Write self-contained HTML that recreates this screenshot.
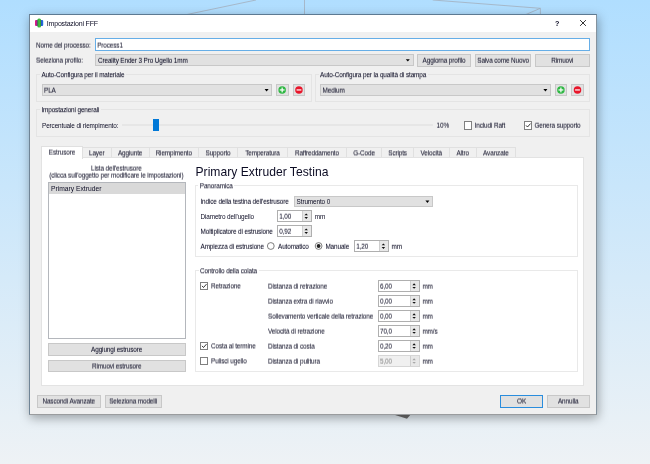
<!DOCTYPE html>
<html lang="it"><head><meta charset="utf-8"><title>Impostazioni FFF</title>
<style>
html,body{margin:0;padding:0}
body{width:650px;height:464px;overflow:hidden;position:relative;
background:linear-gradient(180deg,#b0deff,#eef2f5);
font-family:"Liberation Sans",sans-serif;}
div,span,svg{position:absolute;box-sizing:border-box}
#root{left:0;top:0;width:650px;height:464px;will-change:transform}
.a{overflow:visible}
#dlg{left:29px;top:14px;width:568px;height:401px;background:#f0f0f0;border:1px solid;border-color:#5d7a92 #84929d #9a9c9e #6f8496;
box-shadow:1px 3px 10px rgba(0,0,0,0.34);}
#tb{left:30px;top:15px;width:566px;height:16.7px;background:#fff}
.t{font-size:6.4px;letter-spacing:-0.12px;line-height:8px;height:8px;white-space:pre;color:#000}
.tt{font-size:7px;letter-spacing:-0.19px;line-height:8px;height:8px;white-space:pre;color:#000}
.li{font-size:6.72px;letter-spacing:0;line-height:8px;height:8px;white-space:pre;color:#000}
.h{font-size:12.1px;letter-spacing:0.03px;line-height:14px;height:14px;white-space:pre;color:#000}
.btn{background:#e1e1e1;border:1px solid #c8c8c8}
.btn.def{border:1px solid #2a8ddd}
.inp{background:#fff;border:1px solid #66aee7}
.grp{border:1px solid #e4e4e4}
.grp.w{border-color:#e9e9e9}
.trk{background:#d8d8d8;border:0.5px solid #e6e6e6}
.pane{background:#fff;border:1px solid #e3e3e3}
.tab{background:#f0f0f0;border:1px solid #e0e0e0;border-bottom:none}
.tab.sel{background:#fff;border:1px solid #e0e0e0;border-bottom:none}
.lst{background:#fff;border:1px solid #b4b7bc}
.spin{background:#fff;border:1px solid #afafaf}
.spin.dis{background:#f0f0f0;border-color:#d6d6d6}
.spb{background:#e8e8e8;border-left:1px solid #cfcfcf}
.cb{background:#fff;border:1px solid #808080}
</style></head>
<body>
<div id="root">
<svg class="a" style="left:0;top:0" width="650" height="464" viewBox="0 0 650 464"><g stroke="#a3afbc" stroke-width="0.8" fill="none"><path d="M187 14.5L256 0"/><path d="M304.5 0V14.5"/><path d="M432.7 0L540.35 8.3L525.9 14.5"/><path d="M540.35 8.3V14.5"/></g><path d="M385.5 412L412.9 412L407 418.8Z" fill="#6c6c6c"/></svg>
<div id="dlg"></div>
<div id="tb"></div>
<svg class="a" style="left:0;top:0" width="60" height="40" viewBox="0 0 60 40"><defs><linearGradient id="g1" x1="0" x2="1"><stop offset="0" stop-color="#f0157e"/><stop offset="1" stop-color="#6d2aa6"/></linearGradient><linearGradient id="g2" x1="0" x2="1"><stop offset="0" stop-color="#1f9a35"/><stop offset="0.5" stop-color="#4cc23f"/><stop offset="1" stop-color="#1f9a35"/></linearGradient><linearGradient id="g3" x1="0" x2="1"><stop offset="0" stop-color="#4a35b8"/><stop offset="1" stop-color="#0f7fe6"/></linearGradient></defs><rect x="35" y="20" width="3.2" height="5.9" rx="1" fill="url(#g1)"/><rect x="40.2" y="20" width="3" height="5.9" rx="1" fill="url(#g3)"/><rect x="37.4" y="18.5" width="3.6" height="9" rx="1.5" fill="url(#g2)"/></svg>
<span class="tt" style="left:46.80px;top:20px;color:rgb(12,12,36);">Impostazioni FFF</span>
<span class="tt" style="left:457.20px;width:200px;text-align:center;top:20px;font-weight:bold;font-size:7.2px;color:rgb(12,12,36);">?</span>
<span class="t" style="left:36.00px;top:41px;color:rgba(12,12,36,0.48);text-shadow:0 1px 0 rgba(12,12,36,0.72);">Nome del processo:</span>
<div class="inp" style="left:95px;top:38px;width:495px;height:13px;"></div>
<span class="t" style="left:97.20px;top:41px;color:rgba(12,12,36,0.48);text-shadow:0 1px 0 rgba(12,12,36,0.72);">Process1</span>
<span class="t" style="left:36.00px;top:56px;color:rgba(12,12,36,0.48);text-shadow:0 1px 0 rgba(12,12,36,0.72);">Seleziona profilo:</span>
<div class="btn" style="left:95px;top:54px;width:319px;height:12px;"></div>
<span class="t" style="left:98.00px;top:56px;color:rgba(12,12,36,0.24);text-shadow:0 1px 0 rgba(12,12,36,0.96);">Creality Ender 3 Pro Ugello 1mm</span>
<div class="btn" style="left:417px;top:54px;width:54px;height:13px;"></div>
<span class="t" style="left:344.00px;width:200px;text-align:center;top:56px;color:rgba(12,12,36,0.36);text-shadow:0 1px 0 rgba(12,12,36,0.84);">Aggiorna profilo</span>
<div class="btn" style="left:475px;top:54px;width:56px;height:13px;"></div>
<span class="t" style="left:403.10px;width:200px;text-align:center;top:56px;color:rgba(12,12,36,0.36);text-shadow:0 1px 0 rgba(12,12,36,0.84);">Salva come Nuovo</span>
<div class="btn" style="left:535px;top:54px;width:55px;height:13px;"></div>
<span class="t" style="left:462.30px;width:200px;text-align:center;top:56px;color:rgba(12,12,36,0.36);text-shadow:0 1px 0 rgba(12,12,36,0.84);">Rimuovi</span>
<div class="grp" style="left:36px;top:74px;width:276px;height:28px;"></div>
<span class="t" style="left:41.40px;top:71px;background:#f0f0f0;padding:0 1.5px;margin-left:-1.5px;color:rgba(12,12,36,0.96);text-shadow:0 1px 0 rgba(12,12,36,0.24);">Auto-Configura per il materiale</span>
<div class="btn" style="left:42px;top:84px;width:230px;height:12px;"></div>
<span class="t" style="left:44.00px;top:86px;color:rgba(12,12,36,0.42);text-shadow:0 1px 0 rgba(12,12,36,0.78);">PLA</span>
<div class="btn" style="left:276px;top:84px;width:13px;height:12px;"></div>
<div class="btn" style="left:293px;top:84px;width:12px;height:12px;"></div>
<div class="grp" style="left:315px;top:74px;width:275px;height:28px;"></div>
<span class="t" style="left:320.00px;top:71px;background:#f0f0f0;padding:0 1.5px;margin-left:-1.5px;color:rgba(12,12,36,0.96);text-shadow:0 1px 0 rgba(12,12,36,0.24);">Auto-Configura per la qualità di stampa</span>
<div class="btn" style="left:320px;top:84px;width:231px;height:12px;"></div>
<span class="t" style="left:322.60px;top:86px;color:rgba(12,12,36,0.42);text-shadow:0 1px 0 rgba(12,12,36,0.78);">Medium</span>
<div class="btn" style="left:555px;top:84px;width:12px;height:12px;"></div>
<div class="btn" style="left:571px;top:84px;width:13px;height:12px;"></div>
<div class="grp" style="left:36px;top:109px;width:554px;height:28px;"></div>
<span class="t" style="left:41.40px;top:106px;background:#f0f0f0;padding:0 1.5px;margin-left:-1.5px;color:rgba(12,12,36,0.96);text-shadow:0 1px 0 rgba(12,12,36,0.24);">Impostazioni generali</span>
<span class="t" style="left:42.00px;top:122px;color:rgb(12,12,36);">Percentuale di riempimento:</span>
<div class="trk" style="left:122.4px;top:124px;width:310.6px;height:2px;"></div>
<div class="" style="left:152.6px;top:119px;width:6px;height:12px;background:#0078d7"></div>
<span class="t" style="left:436.60px;top:121px;color:rgba(12,12,36,0.36);text-shadow:0 1px 0 rgba(12,12,36,0.84);">10%</span>
<div class="cb" style="left:464px;top:121px;width:8px;height:9px;"></div>
<span class="t" style="left:474.60px;top:121px;color:rgba(12,12,36,0.36);text-shadow:0 1px 0 rgba(12,12,36,0.84);">Includi Raft</span>
<div class="cb" style="left:524px;top:121px;width:8px;height:9px;"></div>
<span class="t" style="left:534.40px;top:121px;color:rgba(12,12,36,0.36);text-shadow:0 1px 0 rgba(12,12,36,0.84);">Genera supporto</span>
<div class="pane" style="left:41px;top:157px;width:543px;height:229px;"></div>
<div class="tab sel" style="left:41px;top:146px;width:42px;height:13px;"></div>
<span class="t" style="left:-38.00px;width:200px;text-align:center;top:148px;color:rgba(12,12,36,0.48);text-shadow:0 1px 0 rgba(12,12,36,0.72);">Estrusore</span>
<div class="tab" style="left:83px;top:147px;width:29px;height:10px;border-left:none;"></div>
<span class="t" style="left:-3.30px;width:200px;text-align:center;top:149px;color:rgba(12,12,36,0.72);text-shadow:0 1px 0 rgba(12,12,36,0.48);">Layer</span>
<div class="tab" style="left:112px;top:147px;width:38px;height:10px;border-left:none;"></div>
<span class="t" style="left:30.10px;width:200px;text-align:center;top:149px;color:rgba(12,12,36,0.72);text-shadow:0 1px 0 rgba(12,12,36,0.48);">Aggiunte</span>
<div class="tab" style="left:150px;top:147px;width:49px;height:10px;border-left:none;"></div>
<span class="t" style="left:73.80px;width:200px;text-align:center;top:149px;color:rgba(12,12,36,0.72);text-shadow:0 1px 0 rgba(12,12,36,0.48);">Riempimento</span>
<div class="tab" style="left:199px;top:147px;width:39px;height:10px;border-left:none;"></div>
<span class="t" style="left:118.00px;width:200px;text-align:center;top:149px;color:rgba(12,12,36,0.72);text-shadow:0 1px 0 rgba(12,12,36,0.48);">Supporto</span>
<div class="tab" style="left:238px;top:147px;width:50px;height:10px;border-left:none;"></div>
<span class="t" style="left:162.50px;width:200px;text-align:center;top:149px;color:rgba(12,12,36,0.72);text-shadow:0 1px 0 rgba(12,12,36,0.48);">Temperatura</span>
<div class="tab" style="left:288px;top:147px;width:59px;height:10px;border-left:none;"></div>
<span class="t" style="left:216.95px;width:200px;text-align:center;top:149px;color:rgba(12,12,36,0.72);text-shadow:0 1px 0 rgba(12,12,36,0.48);">Raffreddamento</span>
<div class="tab" style="left:347px;top:147px;width:35px;height:10px;border-left:none;"></div>
<span class="t" style="left:264.05px;width:200px;text-align:center;top:149px;color:rgba(12,12,36,0.72);text-shadow:0 1px 0 rgba(12,12,36,0.48);">G-Code</span>
<div class="tab" style="left:382px;top:147px;width:32px;height:10px;border-left:none;"></div>
<span class="t" style="left:297.60px;width:200px;text-align:center;top:149px;color:rgba(12,12,36,0.72);text-shadow:0 1px 0 rgba(12,12,36,0.48);">Scripts</span>
<div class="tab" style="left:414px;top:147px;width:36px;height:10px;border-left:none;"></div>
<span class="t" style="left:331.30px;width:200px;text-align:center;top:149px;color:rgba(12,12,36,0.72);text-shadow:0 1px 0 rgba(12,12,36,0.48);">Velocità</span>
<div class="tab" style="left:450px;top:147px;width:27px;height:10px;border-left:none;"></div>
<span class="t" style="left:362.70px;width:200px;text-align:center;top:149px;color:rgba(12,12,36,0.72);text-shadow:0 1px 0 rgba(12,12,36,0.48);">Altro</span>
<div class="tab" style="left:477px;top:147px;width:39px;height:10px;border-left:none;"></div>
<span class="t" style="left:395.90px;width:200px;text-align:center;top:149px;color:rgba(12,12,36,0.72);text-shadow:0 1px 0 rgba(12,12,36,0.48);">Avanzate</span>
<span class="t" style="left:16.30px;width:200px;text-align:center;top:164px;color:rgba(12,12,36,0.48);text-shadow:0 1px 0 rgba(12,12,36,0.72);">Lista dell'estrusore</span>
<span class="t" style="left:16.30px;width:200px;text-align:center;top:171px;color:rgba(12,12,36,0.48);text-shadow:0 1px 0 rgba(12,12,36,0.72);">(clicca sull'oggetto per modificare le impostazioni)</span>
<div class="lst" style="left:48px;top:182px;width:138px;height:157px;"></div>
<div class="" style="left:49px;top:183px;width:136px;height:11px;background:#d9d9d9"></div>
<span class="li" style="left:51.00px;top:185px;color:rgb(12,12,36);">Primary Extruder</span>
<div class="btn" style="left:48px;top:343px;width:138px;height:13px;"></div>
<span class="t" style="left:16.70px;width:200px;text-align:center;top:345px;color:rgba(12,12,36,0.24);text-shadow:0 1px 0 rgba(12,12,36,0.96);">Aggiungi estrusore</span>
<div class="btn" style="left:48px;top:360px;width:138px;height:12px;"></div>
<span class="t" style="left:16.70px;width:200px;text-align:center;top:362px;color:rgba(12,12,36,0.60);text-shadow:0 1px 0 rgba(12,12,36,0.60);">Rimuovi estrusore</span>
<span class="h" style="left:195.50px;top:165px;color:rgb(12,12,36);">Primary Extruder Testina</span>
<div class="grp w" style="left:195px;top:185px;width:383px;height:72px;"></div>
<span class="t" style="left:199.80px;top:182px;background:#fff;padding:0 1.5px;margin-left:-1.5px;color:rgba(12,12,36,0.84);text-shadow:0 1px 0 rgba(12,12,36,0.36);">Panoramica</span>
<span class="t" style="left:200.40px;top:197px;color:rgba(12,12,36,0.24);text-shadow:0 1px 0 rgba(12,12,36,0.96);">Indice della testina dell'estrusore</span>
<div class="btn" style="left:294px;top:196px;width:139px;height:11px;"></div>
<span class="t" style="left:296.60px;top:198px;color:rgb(12,12,36);">Strumento 0</span>
<span class="t" style="left:200.50px;top:213px;color:rgb(12,12,36);">Diametro dell'ugello</span>
<div class="spin" style="left:277px;top:210px;width:35px;height:12px;"></div>
<div class="spb" style="left:302px;top:211px;width:9px;height:10px;"></div>
<span class="t" style="left:279.20px;top:212px;color:rgba(12,12,36,0.36);text-shadow:0 1px 0 rgba(12,12,36,0.84);">1,00</span>
<span class="t" style="left:314.80px;top:213px;color:rgb(12,12,36);">mm</span>
<span class="t" style="left:200.50px;top:227px;color:rgba(12,12,36,0.24);text-shadow:0 1px 0 rgba(12,12,36,0.96);">Moltiplicatore di estrusione</span>
<div class="spin" style="left:277px;top:225px;width:35px;height:12px;"></div>
<div class="spb" style="left:302px;top:226px;width:9px;height:10px;"></div>
<span class="t" style="left:279.20px;top:227px;color:rgba(12,12,36,0.36);text-shadow:0 1px 0 rgba(12,12,36,0.84);">0,92</span>
<span class="t" style="left:200.50px;top:242px;color:rgba(12,12,36,0.24);text-shadow:0 1px 0 rgba(12,12,36,0.96);">Ampiezza di estrusione</span>
<span class="t" style="left:278.00px;top:242px;color:rgba(12,12,36,0.24);text-shadow:0 1px 0 rgba(12,12,36,0.96);">Automatico</span>
<span class="t" style="left:325.40px;top:242px;color:rgba(12,12,36,0.24);text-shadow:0 1px 0 rgba(12,12,36,0.96);">Manuale</span>
<div class="spin" style="left:354px;top:240px;width:35px;height:12px;"></div>
<div class="spb" style="left:379px;top:241px;width:9px;height:10px;"></div>
<span class="t" style="left:356.20px;top:242px;color:rgba(12,12,36,0.36);text-shadow:0 1px 0 rgba(12,12,36,0.84);">1,20</span>
<span class="t" style="left:391.60px;top:242px;color:rgba(12,12,36,0.24);text-shadow:0 1px 0 rgba(12,12,36,0.96);">mm</span>
<div class="grp w" style="left:195px;top:270px;width:383px;height:102px;"></div>
<span class="t" style="left:200.00px;top:267px;background:#fff;padding:0 1.5px;margin-left:-1.5px;color:rgba(12,12,36,0.84);text-shadow:0 1px 0 rgba(12,12,36,0.36);">Controllo della colata</span>
<span class="t" style="left:268.00px;top:282px;color:rgba(12,12,36,0.48);text-shadow:0 1px 0 rgba(12,12,36,0.72);">Distanza di retrazione</span>
<div class="spin" style="left:378px;top:280px;width:42px;height:12px;"></div>
<div class="spb" style="left:410px;top:281px;width:9px;height:10px;"></div>
<span class="t" style="left:380.00px;top:282px;color:rgba(12,12,36,0.48);text-shadow:0 1px 0 rgba(12,12,36,0.72);">6,00</span>
<span class="t" style="left:422.40px;top:282px;color:rgba(12,12,36,0.42);text-shadow:0 1px 0 rgba(12,12,36,0.78);">mm</span>
<span class="t" style="left:268.00px;top:297px;color:rgba(12,12,36,0.48);text-shadow:0 1px 0 rgba(12,12,36,0.72);">Distanza extra di riavvio</span>
<div class="spin" style="left:378px;top:295px;width:42px;height:12px;"></div>
<div class="spb" style="left:410px;top:296px;width:9px;height:10px;"></div>
<span class="t" style="left:380.00px;top:297px;color:rgba(12,12,36,0.48);text-shadow:0 1px 0 rgba(12,12,36,0.72);">0,00</span>
<span class="t" style="left:422.40px;top:297px;color:rgba(12,12,36,0.42);text-shadow:0 1px 0 rgba(12,12,36,0.78);">mm</span>
<span class="t" style="left:268.00px;top:312px;color:rgba(12,12,36,0.48);text-shadow:0 1px 0 rgba(12,12,36,0.72);">Sollevamento verticale della retrazione</span>
<div class="spin" style="left:378px;top:310px;width:42px;height:12px;"></div>
<div class="spb" style="left:410px;top:311px;width:9px;height:10px;"></div>
<span class="t" style="left:380.00px;top:312px;color:rgba(12,12,36,0.48);text-shadow:0 1px 0 rgba(12,12,36,0.72);">0,00</span>
<span class="t" style="left:422.40px;top:312px;color:rgba(12,12,36,0.42);text-shadow:0 1px 0 rgba(12,12,36,0.78);">mm</span>
<span class="t" style="left:268.00px;top:327px;color:rgba(12,12,36,0.48);text-shadow:0 1px 0 rgba(12,12,36,0.72);">Velocità di retrazione</span>
<div class="spin" style="left:378px;top:325px;width:42px;height:12px;"></div>
<div class="spb" style="left:410px;top:326px;width:9px;height:10px;"></div>
<span class="t" style="left:380.00px;top:327px;color:rgba(12,12,36,0.48);text-shadow:0 1px 0 rgba(12,12,36,0.72);">70,0</span>
<span class="t" style="left:422.40px;top:327px;color:rgba(12,12,36,0.42);text-shadow:0 1px 0 rgba(12,12,36,0.78);">mm/s</span>
<span class="t" style="left:268.00px;top:342px;color:rgba(12,12,36,0.48);text-shadow:0 1px 0 rgba(12,12,36,0.72);">Distanza di costa</span>
<div class="spin" style="left:378px;top:340px;width:42px;height:12px;"></div>
<div class="spb" style="left:410px;top:341px;width:9px;height:10px;"></div>
<span class="t" style="left:380.00px;top:342px;color:rgba(12,12,36,0.48);text-shadow:0 1px 0 rgba(12,12,36,0.72);">0,20</span>
<span class="t" style="left:422.40px;top:342px;color:rgba(12,12,36,0.42);text-shadow:0 1px 0 rgba(12,12,36,0.78);">mm</span>
<span class="t" style="left:268.00px;top:357px;color:rgba(12,12,36,0.48);text-shadow:0 1px 0 rgba(12,12,36,0.72);">Distanza di pulitura</span>
<div class="spin dis" style="left:378px;top:355px;width:42px;height:12px;"></div>
<div class="spb" style="left:410px;top:356px;width:9px;height:10px;"></div>
<span class="t" style="left:380.00px;top:357px;color:rgba(138,138,138,0.48);text-shadow:0 1px 0 rgba(138,138,138,0.72);">5,00</span>
<span class="t" style="left:422.40px;top:357px;color:rgba(12,12,36,0.42);text-shadow:0 1px 0 rgba(12,12,36,0.78);">mm</span>
<div class="cb" style="left:200px;top:282px;width:8px;height:8px;"></div>
<span class="t" style="left:211.00px;top:282px;color:rgba(12,12,36,0.72);text-shadow:0 1px 0 rgba(12,12,36,0.48);">Retrazione</span>
<div class="cb" style="left:200px;top:342px;width:8px;height:8px;"></div>
<span class="t" style="left:211.00px;top:342px;color:rgba(12,12,36,0.72);text-shadow:0 1px 0 rgba(12,12,36,0.48);">Costa al termine</span>
<div class="cb" style="left:200px;top:357px;width:8px;height:8px;"></div>
<span class="t" style="left:211.00px;top:357px;color:rgba(12,12,36,0.72);text-shadow:0 1px 0 rgba(12,12,36,0.48);">Pulisci ugello</span>
<div class="btn" style="left:37px;top:395px;width:64px;height:13px;"></div>
<span class="t" style="left:-31.30px;width:200px;text-align:center;top:397px;color:rgba(12,12,36,0.60);text-shadow:0 1px 0 rgba(12,12,36,0.60);">Nascondi Avanzate</span>
<div class="btn" style="left:105px;top:395px;width:57px;height:13px;"></div>
<span class="t" style="left:33.20px;width:200px;text-align:center;top:397px;color:rgba(12,12,36,0.60);text-shadow:0 1px 0 rgba(12,12,36,0.60);">Seleziona modelli</span>
<div class="btn def" style="left:500px;top:395px;width:43px;height:13px;"></div>
<span class="t" style="left:421.60px;width:200px;text-align:center;top:397px;color:rgba(12,12,36,0.60);text-shadow:0 1px 0 rgba(12,12,36,0.60);">OK</span>
<div class="btn" style="left:547px;top:395px;width:43px;height:13px;"></div>
<span class="t" style="left:468.20px;width:200px;text-align:center;top:397px;color:rgba(12,12,36,0.60);text-shadow:0 1px 0 rgba(12,12,36,0.60);">Annulla</span>
<svg class="a" style="left:0;top:0" width="650" height="464" viewBox="0 0 650 464"><path d="M580.1 20.1l5.8 5.8m0 -5.8l-5.8 5.8" stroke="#111" stroke-width="0.85" fill="none"/><path d="M405.80 59.20h4l-2 2.4z" fill="#000"/><path d="M264.60 89.05h4l-2 2.4z" fill="#000"/><circle cx="282.15" cy="89.95" r="3.75" fill="#2db742"/><rect x="279.75" y="89.35" width="4.8" height="1.2" fill="#fff"/><rect x="281.55" y="87.55" width="1.2" height="4.8" fill="#fff"/><circle cx="298.95" cy="89.95" r="3.75" fill="#e8152a"/><rect x="296.55" y="89.35" width="4.8" height="1.2" fill="#fff"/><path d="M543.40 89.05h4l-2 2.4z" fill="#000"/><circle cx="560.90" cy="89.95" r="3.75" fill="#2db742"/><rect x="558.50" y="89.35" width="4.8" height="1.2" fill="#fff"/><rect x="560.30" y="87.55" width="1.2" height="4.8" fill="#fff"/><circle cx="577.50" cy="89.95" r="3.75" fill="#e8152a"/><rect x="575.10" y="89.35" width="4.8" height="1.2" fill="#fff"/><path d="M526.00 125.40l1.5 1.6l3 -3.4" fill="none" stroke="#111" stroke-width="0.85"/><path d="M425.40 200.50h4l-2 2.4z" fill="#000"/><path d="M304.45 215.30l1.75 -1.9l1.75 1.9z M304.45 217.00l1.75 1.9l1.75 -1.9z" fill="#111"/><path d="M304.45 230.30l1.75 -1.9l1.75 1.9z M304.45 232.00l1.75 1.9l1.75 -1.9z" fill="#111"/><circle cx="270.80" cy="246.00" r="3.4" fill="#fff" stroke="#555" stroke-width="0.75"/><circle cx="318.60" cy="246.00" r="3.4" fill="#fff" stroke="#555" stroke-width="0.75"/><circle cx="318.60" cy="246.00" r="1.9" fill="#222"/><path d="M381.65 245.30l1.75 -1.9l1.75 1.9z M381.65 247.00l1.75 1.9l1.75 -1.9z" fill="#111"/><path d="M412.35 285.20l1.75 -1.9l1.75 1.9z M412.35 286.90l1.75 1.9l1.75 -1.9z" fill="#111"/><path d="M412.35 300.20l1.75 -1.9l1.75 1.9z M412.35 301.90l1.75 1.9l1.75 -1.9z" fill="#111"/><path d="M412.35 315.20l1.75 -1.9l1.75 1.9z M412.35 316.90l1.75 1.9l1.75 -1.9z" fill="#111"/><path d="M412.35 330.20l1.75 -1.9l1.75 1.9z M412.35 331.90l1.75 1.9l1.75 -1.9z" fill="#111"/><path d="M412.35 345.20l1.75 -1.9l1.75 1.9z M412.35 346.90l1.75 1.9l1.75 -1.9z" fill="#111"/><path d="M412.35 360.20l1.75 -1.9l1.75 1.9z M412.35 361.90l1.75 1.9l1.75 -1.9z" fill="#a8a8a8"/><path d="M202.00 285.90l1.5 1.6l3 -3.4" fill="none" stroke="#111" stroke-width="0.85"/><path d="M202.00 345.90l1.5 1.6l3 -3.4" fill="none" stroke="#111" stroke-width="0.85"/></svg>
</div>
</body></html>
